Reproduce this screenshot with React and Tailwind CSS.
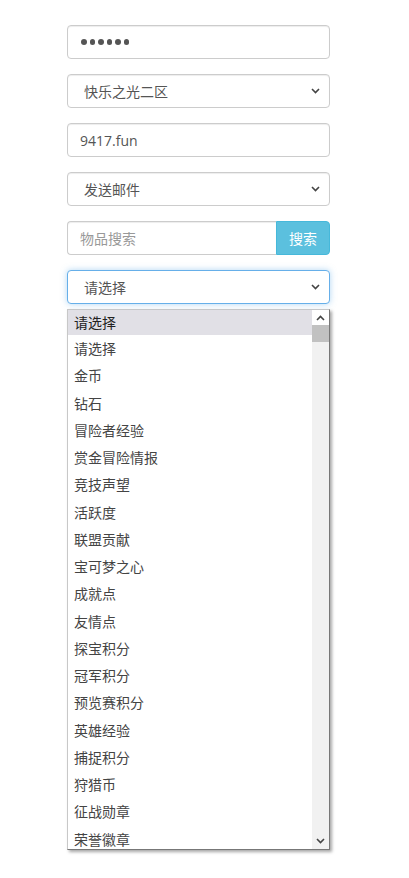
import React from "react";

const items = [
  "请选择",
  "金币",
  "钻石",
  "冒险者经验",
  "赏金冒险情报",
  "竞技声望",
  "活跃度",
  "联盟贡献",
  "宝可梦之心",
  "成就点",
  "友情点",
  "探宝积分",
  "冠军积分",
  "预览赛积分",
  "英雄经验",
  "捕捉积分",
  "狩猎币",
  "征战勋章",
  "荣誉徽章",
];

const font = { fontFamily: '"Segoe UI", "Open Sans", "Noto Sans CJK SC", sans-serif' };

const Chevron = ({ up = false, className = "" }) => (
  <svg width="9" height="6" viewBox="0 0 9 6" className={className}>
    <polyline
      points={up ? "1,5 4.5,1.5 8,5" : "1,1 4.5,4.5 8,1"}
      fill="none"
      stroke="#444"
      strokeWidth="1.6"
    />
  </svg>
);

const Field = ({ children, focus = false, className = "" }) => (
  <div
    className={
      "h-[34px] w-full rounded-[4px] border bg-white flex items-center text-[14px] text-[#555] " +
      (focus
        ? "border-[#66afe9] shadow-[0_0_6px_rgba(102,175,233,0.5)] "
        : "border-[#ccc] shadow-[inset_0_1px_1px_rgba(0,0,0,0.075)] ") +
      className
    }
  >
    {children}
  </div>
);

const SelectField = ({ label, focus }) => (
  <Field focus={focus} className="pl-[16px] pr-[9px] justify-between">
    <span>{label}</span>
    <Chevron />
  </Field>
);

export default function App() {
  return (
    <div className="min-h-[878px] bg-white" style={font}>
      <div className="ml-[67px] w-[263px] pt-[25px] flex flex-col gap-[15px]">
        <Field className="pl-[13px] gap-[2px]">
          {[0, 1, 2, 3, 4, 5].map((i) => (
            <span key={i} className="inline-block w-[5.5px] h-[5.5px] rounded-full bg-[#555] mr-[1px]" />
          ))}
        </Field>
        <SelectField label="快乐之光二区" />
        <Field className="pl-[12px]">9417.fun</Field>
        <SelectField label="发送邮件" />
        <div className="flex h-[34px]">
          <div className="flex-1 h-full rounded-l-[4px] border border-r-0 border-[#ccc] flex items-center pl-[12px] text-[14px] text-[#999] shadow-[inset_0_1px_1px_rgba(0,0,0,0.075)]">
            物品搜索
          </div>
          <div className="w-[54px] h-full rounded-r-[4px] bg-[#5bc0de] border border-[#46b8da] flex items-center justify-center text-[14px] text-white">
            搜索
          </div>
        </div>
        <SelectField label="请选择" focus />
      </div>

      <div className="ml-[67px] mt-[5px] w-[263px] h-[541px] bg-white border border-[#c8c8c8] border-r-[#777] border-b-[#777] shadow-[2px_2px_3px_rgba(0,0,0,0.35)] flex overflow-hidden">
        <div className="flex-1 overflow-hidden text-[14px] text-[#444]">
          <div className="h-[25px] bg-[#e1e0e6] flex items-center pl-[6px] text-[#222]">请选择</div>
          {items.map((t, i) => (
            <div key={i} className="h-[27.25px] flex items-center pl-[6px]">
              {t}
            </div>
          ))}
        </div>
        <div className="w-[17px] bg-[#f1f1f1] flex flex-col">
          <div className="h-[15px] flex items-center justify-center bg-white">
            <Chevron up />
          </div>
          <div className="h-[17px] bg-[#c1c1c1]" />
          <div className="flex-1" />
          <div className="h-[16px] flex items-center justify-center">
            <Chevron />
          </div>
        </div>
      </div>
    </div>
  );
}
